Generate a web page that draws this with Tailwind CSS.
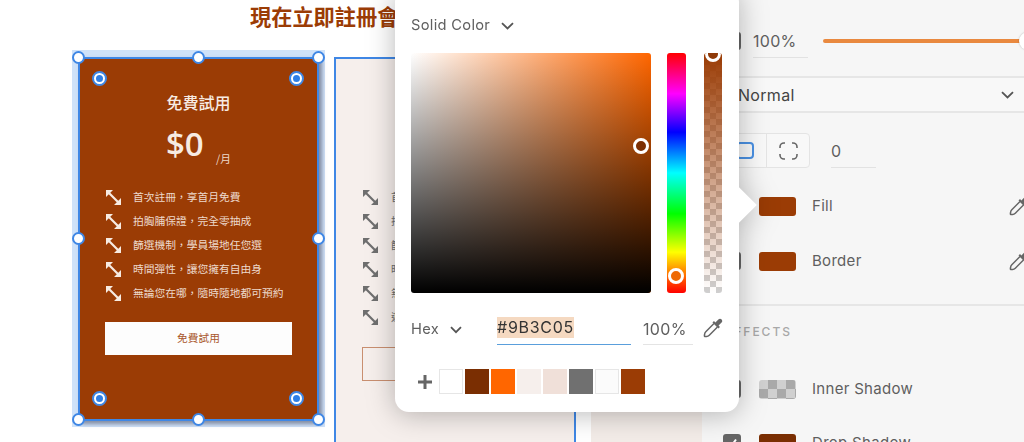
<!DOCTYPE html>
<html lang="zh-Hant">
<head>
<meta charset="utf-8">
<script src="https://cdn.jsdelivr.net/npm/@tailwindcss/browser@4"></script>
</head>
<body class="m-0 bg-white">
<svg class="absolute w-0 h-0">
  <defs>
    <symbol id="arrows" viewBox="0 0 15 15">
      <path d="M0 0H7L0 7ZM15 15H8L15 8Z" fill="currentColor"/>
      <path d="M3 3L12 12" stroke="currentColor" stroke-width="2.2" fill="none"/>
    </symbol>
    <symbol id="dropper" viewBox="0 0 20 20">
      <path d="M11 5.5L2.8 13.7C2 14.5 1.6 15.5 1.6 16.4L1.4 17.6C1.3 18.3 1.8 18.7 2.4 18.6L3.6 18.4C4.6 18.4 5.5 18 6.3 17.2L14.5 9" fill="none" stroke="currentColor" stroke-width="1.5"/>
      <path d="M9.5 4.5L15.5 10.5L17 9L15.6 7.6L18.6 4.6C19.5 3.7 19.5 2.4 18.7 1.4C17.7 0.5 16.4 0.5 15.4 1.4L12.4 4.4L11 3Z" fill="currentColor"/>
    </symbol>
  </defs>
</svg>

<div class="relative w-[1024px] h-[442px] overflow-hidden flex bg-white font-['Inter','Noto_Sans_CJK_TC',sans-serif]">

  <!-- canvas -->
  <div class="relative w-[702px] h-[442px] overflow-hidden shrink-0 bg-white font-['Noto_Sans_CJK_TC','Noto_Sans',sans-serif]">
    <div class="absolute left-[250px] top-[1px] whitespace-nowrap text-[21.2px] leading-[30px] font-bold text-[#9b3c05]">現在立即註冊會員</div>

    <!-- third card -->
    <div class="absolute left-[591px] top-[57px] w-[111px] h-[400px] bg-[#f3ece8]"></div>

    <!-- second card -->
    <div class="absolute left-[334px] top-[57px] w-[242px] h-[400px] bg-[#f6efec] border-2 border-[#3f87e5] text-[#6f6f6f] flex flex-col pl-[27px] pt-[126px]">
      <div class="flex items-center gap-[13px] h-[24px] text-[10.7px]"><svg class="w-[15px] h-[15px]"><use href="#arrows"/></svg><span>首次註冊</span></div>
      <div class="flex items-center gap-[13px] h-[24px] text-[10.7px]"><svg class="w-[15px] h-[15px]"><use href="#arrows"/></svg><span>拍胸脯保證</span></div>
      <div class="flex items-center gap-[13px] h-[24px] text-[10.7px]"><svg class="w-[15px] h-[15px]"><use href="#arrows"/></svg><span>篩選機制</span></div>
      <div class="flex items-center gap-[13px] h-[24px] text-[10.7px]"><svg class="w-[15px] h-[15px]"><use href="#arrows"/></svg><span>時間彈性</span></div>
      <div class="flex items-center gap-[13px] h-[24px] text-[10.7px]"><svg class="w-[15px] h-[15px]"><use href="#arrows"/></svg><span>無論您在哪</span></div>
      <div class="flex items-center gap-[13px] h-[24px] text-[10.7px]"><svg class="w-[15px] h-[15px]"><use href="#arrows"/></svg><span>遊戲</span></div>
      <div class="mt-[18px] -ml-px w-[186px] h-[34px] border border-[#c98f70]"></div>
    </div>

    <!-- selection halo -->
    <div class="absolute left-[72px] top-[50px] w-[253px] h-[377px] bg-[#cfe2f9]"></div>

    <!-- selected card -->
    <div class="absolute left-[78px] top-[57px] w-[241px] h-[364px] bg-[#9b3c05] border-2 border-[#3f87e5] shadow-[3px_3px_4px_rgba(70,70,90,0.55)] flex flex-col items-center text-[#edd9cc]">
      <div class="mt-[32px] text-[16px] leading-[22px] font-medium text-[#f7ebe2]">免費試用</div>
      <div class="relative mt-[5px] h-[44px] w-full">
        <span class="absolute left-[86px] top-[4px] text-[33px] leading-[44px] font-semibold font-['Open_Sans',sans-serif] text-[#f7ebe2]">$0</span>
        <span class="absolute left-[136px] top-[33px] text-[10.7px] leading-[16px]">/月</span>
      </div>
      <div class="mt-[23px] w-full pl-[26px] flex flex-col">
        <div class="flex items-center gap-[12px] h-[24px] text-[10.75px] whitespace-nowrap"><svg class="w-[15px] h-[15px] text-[#f7ebe2]"><use href="#arrows"/></svg><span>首次註冊，享首月免費</span></div>
        <div class="flex items-center gap-[12px] h-[24px] text-[10.75px] whitespace-nowrap"><svg class="w-[15px] h-[15px] text-[#f7ebe2]"><use href="#arrows"/></svg><span>拍胸脯保證，完全零抽成</span></div>
        <div class="flex items-center gap-[12px] h-[24px] text-[10.75px] whitespace-nowrap"><svg class="w-[15px] h-[15px] text-[#f7ebe2]"><use href="#arrows"/></svg><span>篩選機制，學員場地任您選</span></div>
        <div class="flex items-center gap-[12px] h-[24px] text-[10.75px] whitespace-nowrap"><svg class="w-[15px] h-[15px] text-[#f7ebe2]"><use href="#arrows"/></svg><span>時間彈性，讓您擁有自由身</span></div>
        <div class="flex items-center gap-[12px] h-[24px] text-[10.75px] whitespace-nowrap"><svg class="w-[15px] h-[15px] text-[#f7ebe2]"><use href="#arrows"/></svg><span>無論您在哪，隨時隨地都可預約</span></div>
      </div>
      <div class="mt-[17px] w-[187px] h-[33px] bg-[#fdfdfd] flex items-center justify-center text-[10.7px] text-[#a9562b]">免費試用</div>
    </div>

    <!-- resize handles -->
    <div class="absolute left-[72px] top-[51px] w-[13px] h-[13px] rounded-full bg-white border-2 border-[#3f87e5]"></div>
    <div class="absolute left-[192px] top-[51px] w-[13px] h-[13px] rounded-full bg-white border-2 border-[#3f87e5]"></div>
    <div class="absolute left-[312px] top-[51px] w-[13px] h-[13px] rounded-full bg-white border-2 border-[#3f87e5]"></div>
    <div class="absolute left-[72px] top-[232px] w-[13px] h-[13px] rounded-full bg-white border-2 border-[#3f87e5]"></div>
    <div class="absolute left-[312px] top-[232px] w-[13px] h-[13px] rounded-full bg-white border-2 border-[#3f87e5]"></div>
    <div class="absolute left-[72px] top-[413px] w-[13px] h-[13px] rounded-full bg-white border-2 border-[#3f87e5]"></div>
    <div class="absolute left-[192px] top-[413px] w-[13px] h-[13px] rounded-full bg-white border-2 border-[#3f87e5]"></div>
    <div class="absolute left-[312px] top-[413px] w-[13px] h-[13px] rounded-full bg-white border-2 border-[#3f87e5]"></div>

    <!-- radius handles -->
    <div class="absolute left-[93px] top-[72px] w-[13px] h-[13px] rounded-full bg-[#2f7fe6] border-[3px] border-white outline-2 outline-[#3f87e5] -outline-offset-1"></div>
    <div class="absolute left-[290px] top-[72px] w-[13px] h-[13px] rounded-full bg-[#2f7fe6] border-[3px] border-white outline-2 outline-[#3f87e5] -outline-offset-1"></div>
    <div class="absolute left-[93px] top-[392px] w-[13px] h-[13px] rounded-full bg-[#2f7fe6] border-[3px] border-white outline-2 outline-[#3f87e5] -outline-offset-1"></div>
    <div class="absolute left-[290px] top-[392px] w-[13px] h-[13px] rounded-full bg-[#2f7fe6] border-[3px] border-white outline-2 outline-[#3f87e5] -outline-offset-1"></div>
  </div>

  <!-- inspector panel -->
  <div class="flex-1 h-[442px] overflow-hidden bg-[#f6f6f6] text-[15px] text-[#5f5f5f] tracking-[0.3px] flex flex-col">
    <div class="h-[76px] shrink-0 flex items-start pl-[21px] pt-[32px]">
      <div class="w-[18px] h-[18px] rounded-[3px] border-2 border-[#666] shrink-0"></div>
      <div class="ml-[12px] w-[55px] h-[26px] shrink-0 border-b border-[#e2e2e2] text-[16px] leading-[19px]">100%</div>
      <div class="relative ml-[15px] mt-[7px] w-[204px] h-[4px] rounded-full bg-[#e9893f] shrink-0">
        <div class="absolute right-[-10px] top-[-7px] w-[18px] h-[18px] rounded-full bg-white shadow-[0_0_2px_rgba(0,0,0,0.25)]"></div>
      </div>
    </div>
    <div class="h-[2px] shrink-0 bg-[#e6e6e6]"></div>
    <div class="h-[33px] shrink-0 flex items-center pl-[36px] pr-[10px] pt-[1px] bg-[#f8f8f8] text-[16px] text-[#444]">
      <span>Normal</span>
      <svg class="ml-auto w-[13px] h-[8px]" viewBox="0 0 13 8"><path d="M1 1.2L6.5 6.5L12 1.2" fill="none" stroke="#555" stroke-width="1.8"/></svg>
    </div>
    <div class="h-[2px] shrink-0 bg-[#e6e6e6]"></div>
    <div class="h-[56px] shrink-0 flex items-start pl-[21px] pt-[20px]">
      <div class="flex h-[35px] w-[87px] rounded-[4px] border border-[#e4e4e4] bg-[#f8f8f8]">
        <div class="w-[43px] h-full flex items-center justify-center border-r border-[#e4e4e4]">
          <div class="w-[18px] h-[17px] rounded-[4px] border-2 border-[#4a90e2]"></div>
        </div>
        <div class="flex-1 flex items-center justify-center">
          <svg class="w-[19px] h-[18px]" viewBox="0 0 19 18"><path d="M1 6V5C1 2.8 2.8 1 5 1H6M13 1H14C16.2 1 18 2.8 18 5V6M18 12V13C18 15.2 16.2 17 14 17H13M6 17H5C2.8 17 1 15.2 1 13V12" fill="none" stroke="#666" stroke-width="1.6"/></svg>
        </div>
      </div>
      <div class="ml-[21px] w-[45px] h-[35px] border-b border-[#e2e2e2] text-[16px] leading-[36px]">0</div>
    </div>
    <div class="h-[36px] mt-[19px] shrink-0 flex items-center pl-[21px]">
      <div class="w-[18px] h-[18px] rounded-[3px] border-2 border-[#666] shrink-0"></div>
      <div class="ml-[18px] w-[37px] h-[19px] rounded-[3px] bg-[#9b3c05] shrink-0"></div>
      <span class="ml-[16px]">Fill</span>
      <svg class="ml-auto -mr-[5px] w-[20px] h-[20px] text-[#666]"><use href="#dropper"/></svg>
    </div>
    <div class="h-[36px] mt-[19px] shrink-0 flex items-center pl-[21px]">
      <div class="w-[18px] h-[18px] rounded-[3px] border-2 border-[#666] shrink-0"></div>
      <div class="ml-[18px] w-[37px] h-[19px] rounded-[3px] bg-[#9b3c05] shrink-0"></div>
      <span class="ml-[16px]">Border</span>
      <svg class="ml-auto -mr-[5px] w-[20px] h-[20px] text-[#666]"><use href="#dropper"/></svg>
    </div>
    <div class="h-[2px] shrink-0 bg-[#e6e6e6] mt-[25px]"></div>
    <div class="h-[18px] mt-[17px] shrink-0 pl-[23px] text-[12px] leading-[18px] tracking-[2px] text-[#a8a8a8] font-medium">EFFECTS</div>
    <div class="h-[36px] mt-[30px] shrink-0 flex items-center pl-[21px]">
      <div class="w-[18px] h-[18px] rounded-[3px] border-2 border-[#666] shrink-0"></div>
      <div class="ml-[18px] w-[37px] h-[19px] rounded-[3px] shrink-0 bg-[repeating-conic-gradient(#a9a9a9_0_25%,#d0d0d0_0_50%)] bg-[length:18px_18px]"></div>
      <span class="ml-[16px]">Inner Shadow</span>
    </div>
    <div class="h-[36px] mt-[27px] shrink-0 flex items-start pl-[21px]">
      <div class="w-[18px] h-[18px] rounded-[3px] bg-[#666] shrink-0 flex items-center justify-center">
        <svg class="w-[12px] h-[12px]" viewBox="0 0 12 12"><path d="M2 6.5L5 9.5L10 2.5" fill="none" stroke="#fff" stroke-width="2"/></svg>
      </div>
      <div class="ml-[18px] w-[37px] h-[19px] rounded-[3px] bg-[#7a2e02] shrink-0"></div>
      <span class="ml-[16px] leading-[17px]">Drop Shadow</span>
    </div>
  </div>

  <!-- colour picker popover -->
  <div class="absolute left-[395px] top-[-12px] w-[344px] h-[424px] drop-shadow-[0_2px_14px_rgba(0,0,0,0.28)]">
    <div class="absolute right-[-12px] top-[203px] w-[28px] h-[28px] rotate-45 bg-white"></div>
    <div class="relative w-full h-full rounded-[14px] bg-white pt-[12px] px-[16px] flex flex-col tracking-[0.3px]">
      <div class="h-[53px] shrink-0 flex items-center pb-[2px] text-[14.7px] text-[#5f5f5f]">
        <span>Solid Color</span>
        <svg class="ml-[11px] w-[13px] h-[8px]" viewBox="0 0 13 8"><path d="M1 1.2L6.5 6.5L12 1.2" fill="none" stroke="#555" stroke-width="1.8"/></svg>
      </div>
      <div class="flex h-[240px] shrink-0">
        <div class="relative w-[240px] h-full rounded-[3px] overflow-hidden bg-[linear-gradient(to_right,#ffffff,#ff6600)]">
          <div class="absolute inset-0 bg-[linear-gradient(to_top,#000000,rgba(0,0,0,0))]"></div>
        </div>
        <div class="ml-[16px] w-[19px] h-full rounded-[3px] bg-[linear-gradient(to_bottom,#ff0000,#ff00ff_17%,#0000ff_33%,#00ffff_50%,#00ff00_67%,#ffff00_83%,#ff0000)]"></div>
        <div class="relative ml-[18px] w-[18px] h-full rounded-[3px] overflow-hidden bg-[repeating-conic-gradient(#cfcfcf_0_25%,#ffffff_0_50%)] bg-[length:12px_12px]">
          <div class="absolute inset-0 bg-[linear-gradient(to_bottom,#9b3c05,rgba(155,60,5,0))]"></div>
          <div class="absolute left-[1px] top-[-7px] w-[16px] h-[16px] rounded-full bg-[#8f3a08] border-[3px] border-white"></div>
        </div>
      </div>
      <div class="h-[52px] mt-[24px] shrink-0 flex items-start text-[#5f5f5f]">
        <span class="text-[14.7px] leading-[24px]">Hex</span>
        <svg class="ml-[11px] mt-[9px] w-[12px] h-[8px]" viewBox="0 0 12 8"><path d="M1 1.2L6 6.2L11 1.2" fill="none" stroke="#555" stroke-width="1.8"/></svg>
        <div class="ml-[35px] w-[134px] h-[28px] border-b border-[#5a9fdc] shrink-0">
          <span class="block w-fit h-[21px] bg-[#f5d9c1] text-[16px] leading-[21px] tracking-[0.7px] text-[#333]">#9B3C05</span>
        </div>
        <div class="ml-[12px] w-[50px] h-[28px] border-b border-[#e4e4e4] text-[16px] leading-[24px] shrink-0">100%</div>
        <svg class="ml-[10px] mt-[1px] w-[20px] h-[20px] text-[#666]"><use href="#dropper"/></svg>
      </div>
      <div class="flex items-center">
        <svg class="ml-[6px] w-[16px] h-[16px]" viewBox="0 0 16 16"><path d="M8 1V15M1 8H15" fill="none" stroke="#666" stroke-width="3"/></svg>
        <div class="ml-[6px] flex gap-[2px]">
          <div class="w-[24px] h-[25px] bg-white border border-[#e6e6e6]"></div>
          <div class="w-[24px] h-[25px] bg-[#7a2e02]"></div>
          <div class="w-[24px] h-[25px] bg-[#ff6600]"></div>
          <div class="w-[24px] h-[25px] bg-[#f6efec]"></div>
          <div class="w-[24px] h-[25px] bg-[#f0e0d9]"></div>
          <div class="w-[24px] h-[25px] bg-[#707070]"></div>
          <div class="w-[24px] h-[25px] bg-[#fbfbfb] border border-[#e6e6e6]"></div>
          <div class="w-[24px] h-[25px] bg-[#9b3c05]"></div>
        </div>
      </div>
    </div>
    <!-- picker thumbs -->
    <div class="absolute left-[238px] top-[150px] w-[16px] h-[16px] rounded-full bg-[#7d3004] border-[3px] border-white"></div>
    <div class="absolute left-[273px] top-[280px] w-[16px] h-[16px] rounded-full bg-[#ee6a05] border-[3px] border-white"></div>
  </div>
</div>
</body>
</html>
